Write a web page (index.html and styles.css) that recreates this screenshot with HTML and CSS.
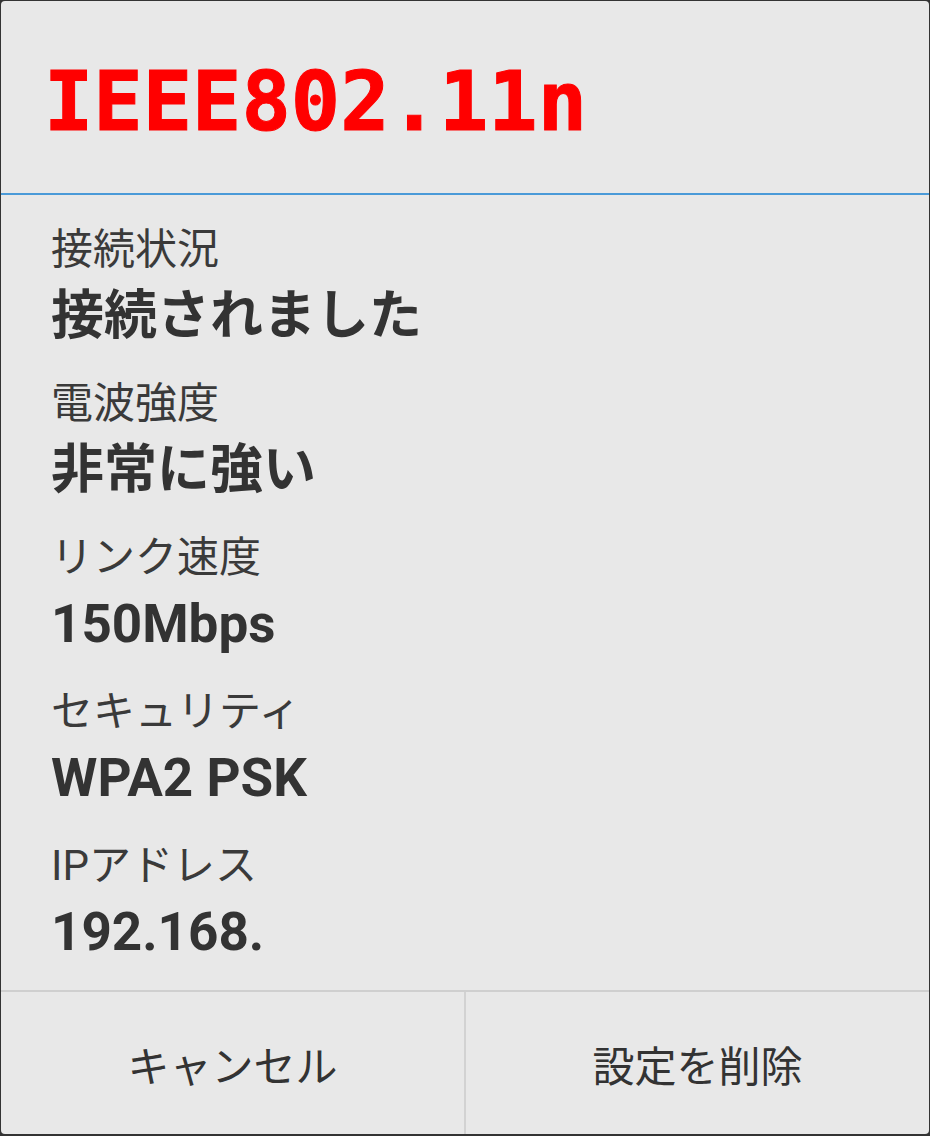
FILE: index.html
```html
<!DOCTYPE html>
<html lang="ja">
<head>
    <meta charset="UTF-8">
    <title>IEEE802.11n</title>
    <link rel="stylesheet" href="styles.css">
</head>
<body>
<div class="dialog">
    <div class="dialog-head">
        <h1 class="dialog-title">IEEE802.11n</h1>
    </div>

    <div class="dialog-body">
        <div class="info">
            <div class="info-label">接続状況</div>
            <div class="info-value">接続されました</div>
        </div>
        <div class="info">
            <div class="info-label">電波強度</div>
            <div class="info-value">非常に強い</div>
        </div>
        <div class="info">
            <div class="info-label">リンク速度</div>
            <div class="info-value">150Mbps</div>
        </div>
        <div class="info">
            <div class="info-label">セキュリティ</div>
            <div class="info-value">WPA2 PSK</div>
        </div>
        <div class="info">
            <div class="info-label">IPアドレス</div>
            <div class="info-value">192.168.</div>
        </div>
    </div>

    <div class="dialog-buttons">
        <div class="btn">キャンセル</div>
        <div class="btn">設定を削除</div>
    </div>
</div>
</body>
</html>
```

FILE: styles.css
```css
* {
    margin: 0;
    padding: 0;
    box-sizing: border-box;
}

body {
    background: #333;
    padding: 1px 1px 2px 1px;
    font-family: Roboto, "Noto Sans CJK JP", sans-serif;
    color: #333;
}

.dialog {
    height: 1133px;
    background: #e8e8e8;
    border-radius: 4px;
    display: flex;
    flex-direction: column;
    overflow: hidden;
}

/* タイトル部分 */
.dialog-head {
    height: 194px;
    padding: 51px 0 0 43px;
    border-bottom: 2px solid #4a9ad8;
}

.dialog-title {
    font: bold 82px/100px "DejaVu Sans Mono", monospace;
    color: #f00;
    -webkit-text-stroke: 1px #f00;
}

/* 詳細情報 */
.dialog-body {
    padding: 25px 0 21px 50px;
    display: flex;
    flex-direction: column;
    gap: 21px;
}

.info-label {
    font-size: 42px;
    line-height: 60px;
    color: #3a3a3a;
}

.info-value {
    font-size: 53px;
    line-height: 73px;
    font-weight: bold;
    color: #333;
}

/* ボタン */
.dialog-buttons {
    flex: 1;
    display: flex;
    border-top: 2px solid #cfcfcf;
}

.btn {
    flex: 1;
    display: flex;
    align-items: center;
    justify-content: center;
    font-size: 42px;
    color: #333;
}

.btn + .btn {
    border-left: 2px solid #d2d2d2;
}
```
